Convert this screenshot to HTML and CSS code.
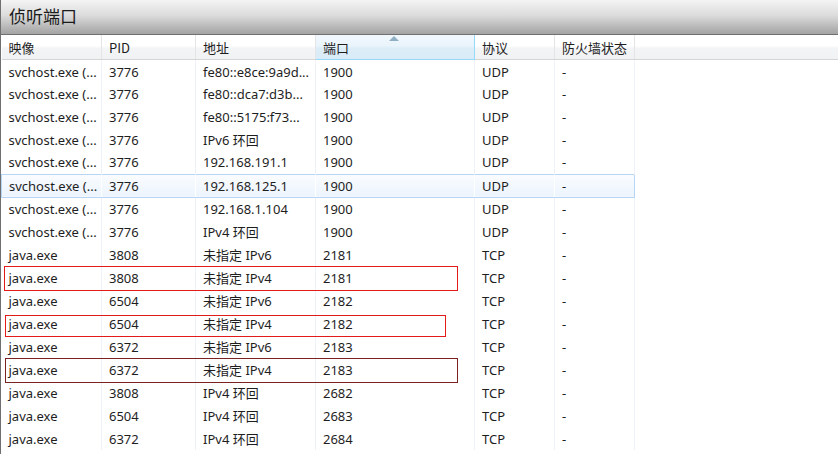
FILE: index.html
```html
<!DOCTYPE html>
<html lang="zh-CN">
<head>
  <meta charset="utf-8">
  <link rel="stylesheet" href="styles.css">
</head>
<body>
  <div class="window">
    <div class="title">侦听端口</div>
    <div class="list">
      <table class="ports">
        <colgroup>
          <col class="c-image">
          <col class="c-pid">
          <col class="c-addr">
          <col class="c-port">
          <col class="c-proto">
          <col class="c-fw">
          <col>
        </colgroup>
        <thead>
          <tr>
            <th>映像</th>
            <th>PID</th>
            <th>地址</th>
            <th class="sorted">端口<span class="sort-arrow"></span></th>
            <th>协议</th>
            <th>防火墙状态</th>
            <th class="filler"></th>
          </tr>
        </thead>
        <tbody>
          <tr><td>svchost.exe (...</td><td>3776</td><td>fe80::e8ce:9a9d...</td><td>1900</td><td>UDP</td><td>-</td><td class="filler"></td></tr>
          <tr><td>svchost.exe (...</td><td>3776</td><td>fe80::dca7:d3b...</td><td>1900</td><td>UDP</td><td>-</td><td class="filler"></td></tr>
          <tr><td>svchost.exe (...</td><td>3776</td><td>fe80::5175:f73...</td><td>1900</td><td>UDP</td><td>-</td><td class="filler"></td></tr>
          <tr><td>svchost.exe (...</td><td>3776</td><td>IPv6 环回</td><td>1900</td><td>UDP</td><td>-</td><td class="filler"></td></tr>
          <tr><td>svchost.exe (...</td><td>3776</td><td>192.168.191.1</td><td>1900</td><td>UDP</td><td>-</td><td class="filler"></td></tr>
          <tr class="selected"><td>svchost.exe (...</td><td>3776</td><td>192.168.125.1</td><td>1900</td><td>UDP</td><td>-</td><td class="filler"></td></tr>
          <tr><td>svchost.exe (...</td><td>3776</td><td>192.168.1.104</td><td>1900</td><td>UDP</td><td>-</td><td class="filler"></td></tr>
          <tr><td>svchost.exe (...</td><td>3776</td><td>IPv4 环回</td><td>1900</td><td>UDP</td><td>-</td><td class="filler"></td></tr>
          <tr><td>java.exe</td><td>3808</td><td>未指定 IPv6</td><td>2181</td><td>TCP</td><td>-</td><td class="filler"></td></tr>
          <tr><td>java.exe</td><td>3808</td><td>未指定 IPv4</td><td>2181</td><td>TCP</td><td>-</td><td class="filler"></td></tr>
          <tr><td>java.exe</td><td>6504</td><td>未指定 IPv6</td><td>2182</td><td>TCP</td><td>-</td><td class="filler"></td></tr>
          <tr><td>java.exe</td><td>6504</td><td>未指定 IPv4</td><td>2182</td><td>TCP</td><td>-</td><td class="filler"></td></tr>
          <tr><td>java.exe</td><td>6372</td><td>未指定 IPv6</td><td>2183</td><td>TCP</td><td>-</td><td class="filler"></td></tr>
          <tr><td>java.exe</td><td>6372</td><td>未指定 IPv4</td><td>2183</td><td>TCP</td><td>-</td><td class="filler"></td></tr>
          <tr><td>java.exe</td><td>3808</td><td>IPv4 环回</td><td>2682</td><td>TCP</td><td>-</td><td class="filler"></td></tr>
          <tr><td>java.exe</td><td>6504</td><td>IPv4 环回</td><td>2683</td><td>TCP</td><td>-</td><td class="filler"></td></tr>
          <tr><td>java.exe</td><td>6372</td><td>IPv4 环回</td><td>2684</td><td>TCP</td><td>-</td><td class="filler"></td></tr>
        </tbody>
      </table>

      <!-- hand-drawn annotations over the list -->
      <div class="mark mark-1"></div>
      <div class="mark mark-2"></div>
      <div class="mark mark-3"></div>
    </div>
  </div>
</body>
</html>
```

FILE: styles.css
```css
* {
  box-sizing: border-box;
}

html, body {
  margin: 0;
  padding: 0;
  background: #ffffff;
}

body {
  width: 838px;
  height: 454px;
  overflow: hidden;
  font-family: "Noto Sans", "Noto Sans CJK SC", sans-serif;
  font-size: 13px;
  color: #1e1e1e;
}

.window {
  height: 454px;
  border-left: 1px solid #6f6f6f;
}

.title {
  height: 35px;
  padding: 4px 0 0 8px;
  font-family: "Noto Sans CJK SC", sans-serif;
  font-size: 17px;
  line-height: 24px;
  color: #1a1a1a;
  background: linear-gradient(to bottom, #f4f4f4 0%, #dcdcdc 45%, #b2b2b2 85%, #a4a4a4 100%);
  border-bottom: 1px solid #707070;
}

.list {
  position: relative;
}

.ports {
  border-collapse: collapse;
  table-layout: fixed;
  width: 837px;
}

.c-image { width: 100px; }
.c-pid { width: 94px; }
.c-addr { width: 120px; }
.c-port { width: 159px; }
.c-proto { width: 80px; }
.c-fw { width: 80px; }

.ports th {
  position: relative;
  height: 24px;
  padding: 0 0 0 7px;
  font-weight: normal;
  text-align: left;
  white-space: nowrap;
  font-family: "Noto Sans CJK SC", sans-serif;
  background: linear-gradient(to bottom, #ffffff 0%, #ffffff 45%, #f3f4f6 55%, #f1f2f4 100%);
  border-right: 1px solid #e4e5e7;
  border-bottom: 1px solid #d5d5d5;
  padding-top: 2px;
}

.ports th.sorted {
  background: linear-gradient(to bottom, #f1f8fd 0%, #e9f4fb 45%, #dcedf8 55%, #d9ebf7 100%);
  border-left: 1px solid #96d9f9;
  border-right: 1px solid #96d9f9;
  border-bottom-color: #96d9f9;
}

.ports th.filler {
  border-right: none;
}

.sort-arrow {
  position: absolute;
  top: 1px;
  left: 73px;
  width: 0;
  height: 0;
  border-left: 5px solid transparent;
  border-right: 5px solid transparent;
  border-bottom: 5px solid #8fb0c4;
}

.ports td {
  height: 23px;
  padding: 0 0 0 7px;
  white-space: nowrap;
  overflow: hidden;
  border-right: 1px solid #edf2fa;
  font-family: "Noto Sans", "Noto Sans CJK SC", sans-serif;
}

.ports td.filler {
  border-right: none;
}

.ports tbody tr:first-child td {
  padding-top: 2px;
}

.ports tr.selected td {
  background: linear-gradient(to bottom, #fafcff 0%, #ecf4fd 100%);
  border-top: 1px solid #b9d5f6;
  border-bottom: 1px solid #b9d5f6;
  border-right-color: transparent;
}

.ports tr.selected td:first-child {
  border-left: 1px solid #b9d5f6;
}

.ports tr.selected td:nth-child(6) {
  border-right: 1px solid #b9d5f6;
}

.ports tr.selected td.filler {
  background: #ffffff;
  border-top-color: transparent;
  border-bottom-color: transparent;
}

.mark {
  position: absolute;
  border: 1px solid #e31a1a;
}

.mark-1 {
  left: 3px;
  top: 231px;
  width: 454px;
  height: 25px;
}

.mark-2 {
  left: 4px;
  top: 280px;
  width: 441px;
  height: 22px;
}

.mark-3 {
  left: 4px;
  top: 323px;
  width: 453px;
  height: 25px;
  border-color: #7a2323;
}
```
